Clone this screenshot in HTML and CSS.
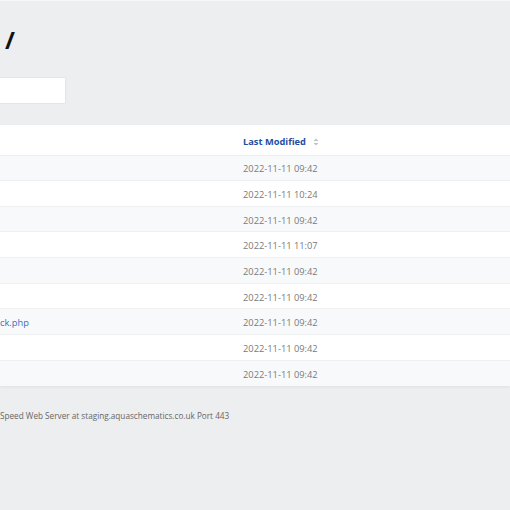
FILE: index.html
```html
<!DOCTYPE html>
<html>
<head>
<meta charset="utf-8">
<title>Index of /</title>
<link rel="stylesheet" href="styles.css">
</head>
<body>
<div class="page">
  <h1 class="title">/</h1>
  <div class="search"><input class="search-input" type="text" aria-label="Search"></div>
  <table class="listing">
    <thead>
      <tr>
        <th class="c-name"></th>
        <th class="c-mod"><span class="sort-label">Last Modified</span><span class="sort"><svg width="6" height="8" viewBox="0 0 6 8"><path d="M3 0.5 L5.5 3 H0.5 Z M3 7.5 L5.5 5 H0.5 Z" fill="#bfc3c8"/></svg></span></th>
      </tr>
    </thead>
    <tbody>
      <tr><td class="c-name"></td><td class="c-mod">2022-11-11 09:42</td></tr>
      <tr><td class="c-name"></td><td class="c-mod">2022-11-11 10:24</td></tr>
      <tr><td class="c-name"></td><td class="c-mod">2022-11-11 09:42</td></tr>
      <tr><td class="c-name"></td><td class="c-mod">2022-11-11 11:07</td></tr>
      <tr><td class="c-name"></td><td class="c-mod">2022-11-11 09:42</td></tr>
      <tr><td class="c-name"></td><td class="c-mod">2022-11-11 09:42</td></tr>
      <tr><td class="c-name"><a href="#">ck.php</a></td><td class="c-mod">2022-11-11 09:42</td></tr>
      <tr><td class="c-name"></td><td class="c-mod">2022-11-11 09:42</td></tr>
      <tr><td class="c-name"></td><td class="c-mod">2022-11-11 09:42</td></tr>
    </tbody>
  </table>
  <p class="footer">Speed Web Server at staging.aquaschematics.co.uk Port 443</p>
</div>
</body>
</html>
```

FILE: styles.css
```css
html, body {
  margin: 0;
  padding: 0;
  background: #edeef0;
  overflow: hidden;
  width: 510px;
  height: 510px;
}
body {
  border-top: 1px solid #f7f7f8;
  box-sizing: border-box;
  font-family: "Open Sans", "Noto Sans", sans-serif;
}
.page {
  width: 510px;
  display: flex;
  flex-direction: column;
}
.title {
  margin: 24px 0 0 5px;
  font-size: 24px;
  line-height: 30px;
  font-weight: 700;
  color: #111;
  height: 30px;
}
.search {
  margin-top: 22px;
}
.search-input {
  display: block;
  box-sizing: border-box;
  width: 66px;
  height: 27px;
  border: 1px solid #e3e5e8;
  border-left: none;
  border-radius: 0 2px 2px 0;
  background: #fff;
  outline: none;
  padding: 0;
}
.listing {
  margin-top: 21px;
  width: 510px;
  border-collapse: collapse;
  background: #fff;
  box-shadow: 0 1px 3px rgba(0,0,0,0.06);
  font-size: 9.3px;
}
.listing th {
  height: 30px;
  box-sizing: border-box;
  text-align: left;
  font-weight: 700;
  color: #1d4ea3;
  border-bottom: 1px solid #eceef0;
  padding: 3px 10px 0;
  white-space: nowrap;
}
.listing td {
  height: 25.67px;
  box-sizing: border-box;
  padding: 2px 10px 0;
  border-bottom: 1px solid #eff0f2;
  color: #7a7a7a;
  white-space: nowrap;
}
.listing tbody tr:nth-child(odd) { background: #f8f9fa; }
.listing tbody tr:last-child td { border-bottom: none; }
.listing .c-name { width: 233px; padding-left: 0; padding-right: 0; }
.listing a {
  color: #3b6cc0;
  text-decoration: none;
}
.sort {
  display: inline-block;
  margin-left: 7px;
  vertical-align: -1px;
}
.sort svg { display: block; }
.footer {
  margin: 24px 0 0 0;
  font-size: 8.2px;
  color: #666;
}
```
